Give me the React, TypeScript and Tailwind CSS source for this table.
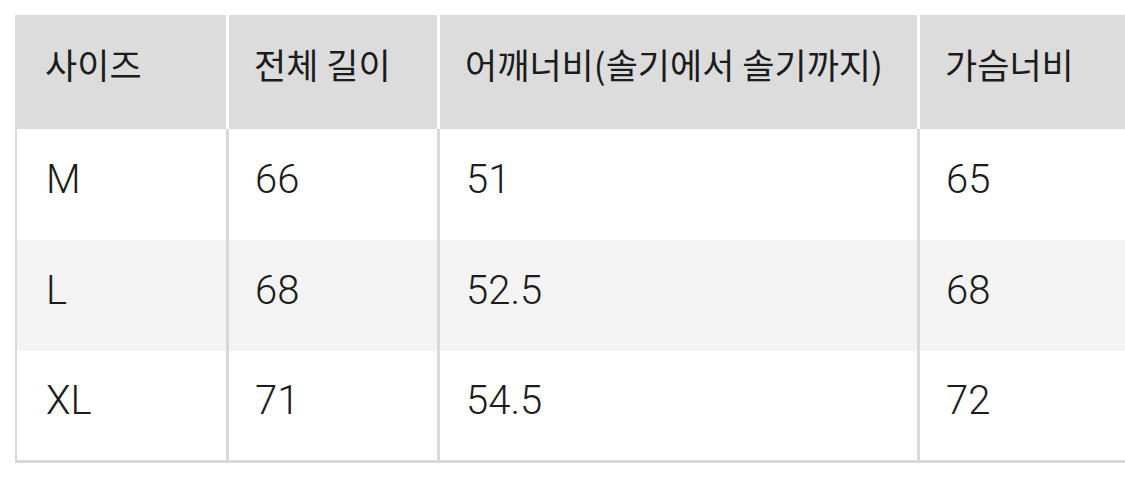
// App.tsx — size chart table

const header = ['사이즈', '전체 길이', '어깨너비(솔기에서 솔기까지)', '가슴너비'];

const rows = [
  ['M', '66', '51', '65'],
  ['L', '68', '52.5', '68'],
  ['XL', '71', '54.5', '72'],
];

const colWidth = ['w-[211px]', 'w-[211px]', 'w-[480px]', 'flex-1'];

export default function App() {
  return (
    <div className="w-[1125px] h-[492px] overflow-hidden bg-white pt-[15px] pl-[15px] text-[#1c1c1c]">
      <div className="flex flex-col w-[1110px]">
        {/* 헤더 */}
        <div className="flex h-[114px] bg-[#dcdcdc] font-['Noto_Sans_CJK_KR',sans-serif] text-[35px]">
          {header.map((h, i) => (
            <div
              key={h}
              className={`${colWidth[i]} flex items-center pb-[16px] whitespace-nowrap ${i === 0 ? 'pl-[30px]' : 'pl-[25px] border-l-[3px] border-white'}`}
            >
              {h}
            </div>
          ))}
        </div>

        {/* 본문 */}
        {rows.map((row, r) => (
          <div
            key={row[0]}
            className={`flex ${r === 2 ? 'h-[112px] border-b-[3px] border-[#d9d9d9]' : 'h-[111px]'} ${r === 1 ? 'bg-[#f3f3f3]' : 'bg-white'} font-['Roboto',sans-serif] font-light text-[40px]`}
          >
            {row.map((v, i) => (
              <div
                key={i}
                className={`${colWidth[i]} flex items-center pb-[10px] border-[#d9d9d9] ${i === 0 ? 'pl-[29px] border-l-[2px]' : 'pl-[26px] border-l-[3px]'}`}
              >
                {v}
              </div>
            ))}
          </div>
        ))}
      </div>
    </div>
  );
}
